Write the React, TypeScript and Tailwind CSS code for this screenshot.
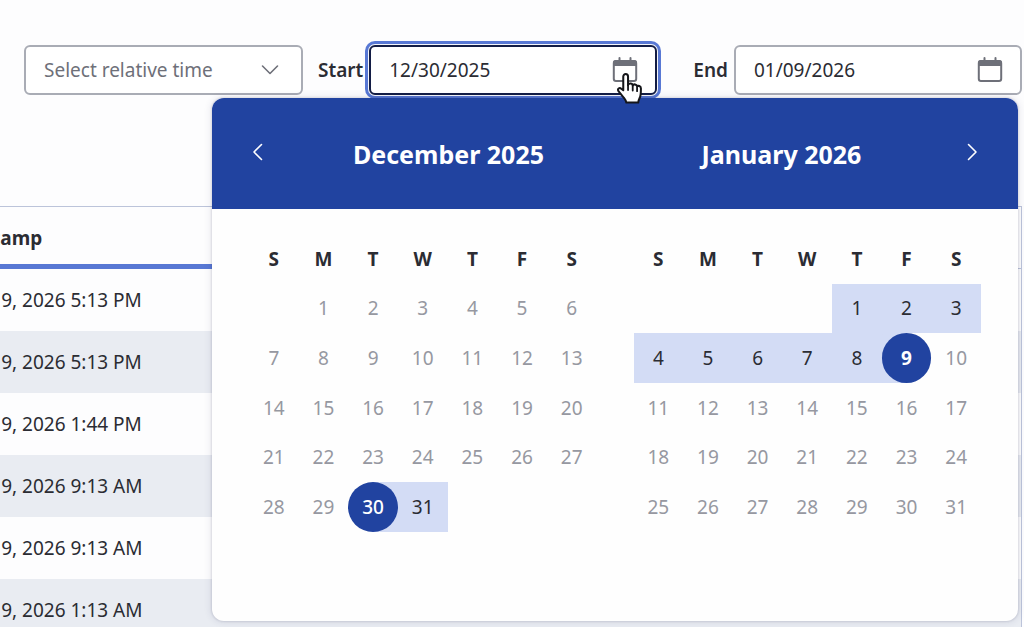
import { useState, type ReactNode } from "react";

const WEEKDAYS = ["S", "M", "T", "W", "T", "F", "S"];

const ROWS = [
  "Fri, Jan 9, 2026 5:13 PM",
  "Fri, Jan 9, 2026 5:13 PM",
  "Fri, Jan 9, 2026 1:44 PM",
  "Fri, Jan 9, 2026 9:13 AM",
  "Fri, Jan 9, 2026 9:13 AM",
  "Fri, Jan 9, 2026 1:13 AM",
];

function CalendarIcon() {
  return (
    <svg width="26" height="26" viewBox="0 0 26 26" fill="none" aria-hidden="true">
      <rect x="1.8" y="4" width="22.4" height="20" rx="2.2" stroke="#6e7079" strokeWidth="2" />
      <path d="M1 9V6a3 3 0 0 1 3-3h18a3 3 0 0 1 3 3v3z" fill="#6e7079" />
      <path d="M7.5 1v4M18.5 1v4" stroke="#6e7079" strokeWidth="2" strokeLinecap="round" />
    </svg>
  );
}

function Chevron({ d }: { d: string }) {
  return (
    <svg width="18" height="18" viewBox="0 0 18 18" fill="none" aria-hidden="true">
      <path d={d} stroke="currentColor" strokeWidth="1.6" strokeLinecap="round" strokeLinejoin="round" />
    </svg>
  );
}

function HandPointer() {
  return (
    <svg
      className="pointer-events-none absolute top-[25px] right-[11px] z-20"
      width="30"
      height="34"
      viewBox="0 0 28 32"
      aria-hidden="true"
    >
      <path
        d="M8.6 17.2V4.3c0-3.2 4.5-3.2 4.5 0v8.1c.4-2.3 4.2-2.2 4.4.3.8-1.7 4-1.3 4.1 1 .9-1.2 3.6-.6 3.6 1.7 0 3.3.2 6.4-1.2 9.1-.8 1.6-1.2 2.4-1.3 4.3H11.5c-.2-2-1.400-3.300-2.700-5L4.100 18c-1.300-2 .9-3.800 2.600-2.300z"
        fill="white"
        stroke="#15161a"
        strokeWidth="1.9"
        strokeLinejoin="round"
      />
      <path d="M13.1 12v5M17.5 13v4.5M21.6 14.5v3.5" stroke="#15161a" strokeWidth="1.7" strokeLinecap="round" />
    </svg>
  );
}

interface DateFieldProps {
  id: string;
  label: string;
  initial: string;
  active?: boolean;
  children?: ReactNode;
}

function DateField({ id, label, initial, active = false, children }: DateFieldProps) {
  const [value, setValue] = useState(initial);
  return (
    <div className="flex min-w-0 flex-auto items-center gap-1.5">
      <label htmlFor={id} className="font-semibold">
        {label}
      </label>
      <div
        className={
          active
            ? "relative flex h-[50px] min-w-0 flex-auto items-center rounded-md border-2 border-[#131d45] bg-white shadow-[0_0_0_1px_#f4f6fb,0_0_0_4px_#5878d4]"
            : "relative flex h-[50px] min-w-0 flex-auto items-center rounded-md border-2 border-[#a9acb5] bg-white"
        }
      >
        <input
          id={id}
          value={value}
          onChange={(event) => setValue(event.target.value)}
          className="h-full w-48 min-w-0 flex-auto bg-transparent pl-[18px] outline-none"
        />
        <button type="button" aria-label={`Choose ${label.toLowerCase()} date`} className="mr-[17px]">
          <CalendarIcon />
        </button>
        {children}
      </div>
    </div>
  );
}

interface MonthProps {
  name: string;
  firstWeekday: number;
  rangeFrom: number;
  rangeTo: number;
  endpoint: number;
  current?: number;
}

function Month({ name, firstWeekday, rangeFrom, rangeTo, endpoint, current }: MonthProps) {
  const days = Array.from({ length: 31 }, (_, i) => i + 1);
  return (
    <section aria-label={name} className="grid grid-cols-7 content-start">
      {WEEKDAYS.map((day, i) => (
        <div key={i} className="flex aspect-square items-center justify-center font-bold">
          {day}
        </div>
      ))}
      {Array.from({ length: firstWeekday }, (_, i) => (
        <div key={`blank-${i}`} />
      ))}
      {days.map((day) => {
        const inRange = day >= rangeFrom && day <= rangeTo;
        const isEndpoint = day === endpoint;
        const cell = isEndpoint
          ? day === rangeFrom
            ? "aspect-square bg-linear-to-r from-[#fefefe] from-50% to-[#d3dcf5] to-50%"
            : "aspect-square bg-linear-to-r from-[#d3dcf5] from-50% to-[#fefefe] to-50%"
          : inRange
            ? "aspect-square bg-[#d3dcf5]"
            : "aspect-square";
        const button = isEndpoint
          ? day === current
            ? "size-full rounded-full bg-[#2143a0] font-bold text-white"
            : "size-full rounded-full bg-[#2143a0] font-medium text-white"
          : inRange
            ? "size-full"
            : "size-full text-[#9698a1]";
        return (
          <div key={day} className={cell}>
            <button type="button" className={button}>
              {day}
            </button>
          </div>
        );
      })}
    </section>
  );
}

export default function App() {
  return (
    <main className="h-screen overflow-hidden bg-[#fdfdfe] font-['Noto_Sans',sans-serif] text-[19px]/6 text-[#2b2c33]">
      <div className="relative">
        <form className="flex items-center gap-[15px] pt-[45px] pr-0.5 pb-[3px] pl-6">
          <div className="relative w-[279px] shrink-0">
            <select
              aria-label="Relative time"
              defaultValue=""
              className="h-[50px] w-full appearance-none rounded-md border-2 border-[#a9acb5] bg-white pl-[18px] text-[#6e7079] outline-none"
            >
              <option value="">Select relative time</option>
            </select>
            <span className="pointer-events-none absolute inset-y-0 right-6 flex items-center text-[#6e7079]">
              <Chevron d="M1.5 5 9 12.5l7.5-7.5" />
            </span>
          </div>
          <div className="flex min-w-0 flex-1 gap-9">
            <DateField id="start" label="Start" initial="12/30/2025" active>
              <HandPointer />
            </DateField>
            <DateField id="end" label="End" initial="01/09/2026" />
          </div>
        </form>

        <div
          role="dialog"
          aria-label="Choose date range"
          className="absolute top-full right-1.5 left-[212px] z-10 overflow-hidden rounded-xl bg-[#fefefe] shadow-[0_0_2px_1px_rgba(40,40,80,0.12),0_0_6px_3px_rgba(40,40,80,0.06)]"
        >
          <header className="flex h-[111px] items-center bg-[#2143a0] px-[22px] text-white">
            <button type="button" aria-label="Previous month" className="flex w-12 justify-center pb-1">
              <Chevron d="M12.5 1.5 5 9l7.5 7.5" />
            </button>
            <div className="grid flex-1 grid-cols-2 text-center text-[25px]/8 font-bold">
              <h2>December 2025</h2>
              <h2>January 2026</h2>
            </div>
            <button type="button" aria-label="Next month" className="flex w-12 justify-center pb-1">
              <Chevron d="M5.5 1.5 13 9l-7.5 7.5" />
            </button>
          </header>
          <div className="grid grid-cols-2 gap-[37px] px-[37px] pt-[25px] pb-[89px]">
            <Month name="December 2025" firstWeekday={1} rangeFrom={30} rangeTo={31} endpoint={30} />
            <Month name="January 2026" firstWeekday={4} rangeFrom={1} rangeTo={9} endpoint={9} current={9} />
          </div>
        </div>
      </div>

      <div className="mt-[108px] mr-0.5 -ml-20 border-t border-r border-[#bcc4da]">
        <table className="w-full border-separate border-spacing-0 text-left">
          <thead>
            <tr className="h-[62px]">
              <th className="w-1/2 border-b-[5px] border-[#5878d4] pt-1 pl-4 font-bold">Timestamp</th>
              <th aria-label="Details" className="border-b border-[#bcc4da]" />
            </tr>
          </thead>
          <tbody>
            {ROWS.map((row, i) => (
              <tr key={i} className="h-[62px] even:bg-[#e9ecf2]">
                <td className="pl-4">{row}</td>
                <td />
              </tr>
            ))}
          </tbody>
        </table>
      </div>
    </main>
  );
}
